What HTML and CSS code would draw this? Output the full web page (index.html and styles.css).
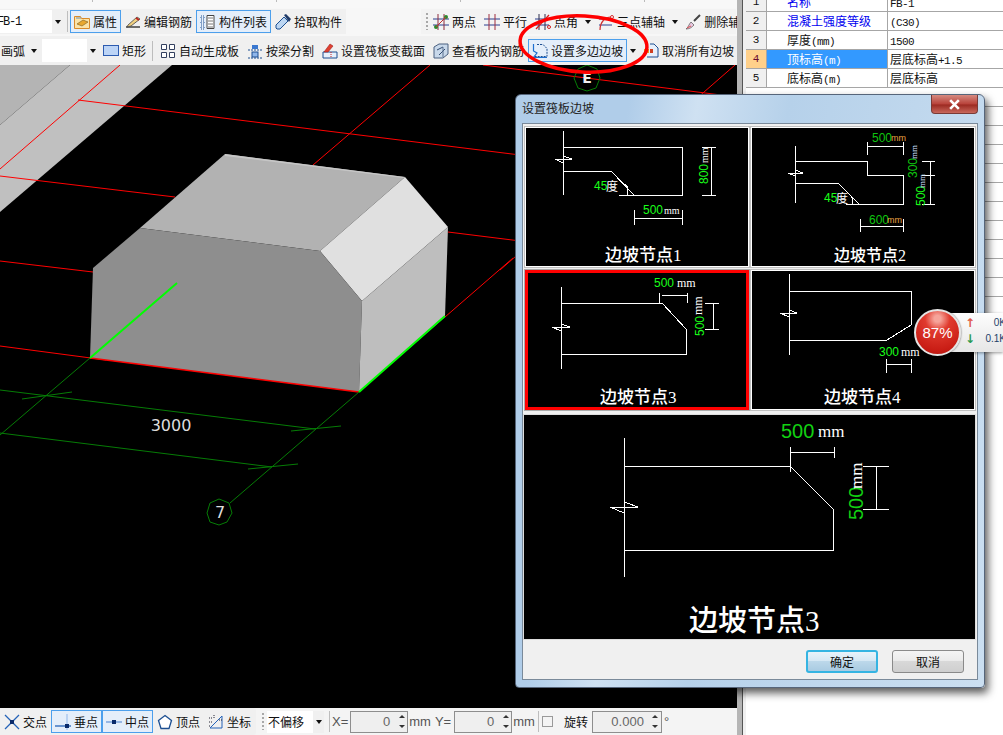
FILE: index.html
```html
<!DOCTYPE html>
<html lang="zh">
<head>
<meta charset="utf-8">
<title>设置筏板边坡</title>
<link rel="stylesheet" href="styles.css">
</head>
<body>
<div class="app">
  <div class="workspace">
    <div class="topstrip"><i></i><i></i><i></i><i></i></div>
    <div class="tb tb1">
      <div class="band">
        <div class="combo combo-fb"><span class="fbname">FB-1</span><b class="arrow-box"><i class="arrow"></i></b></div>
        <i class="sep"></i>
        <div class="btn on"><svg class="ic" viewBox="0 0 16 16"><path d="M.5 2.5h6l1 2h8v10H.5z" fill="#fbe3a8" stroke="#d98a2a"/><path d="M3 10l6-4 5 2-6 4z" fill="#e8a830" stroke="#7a5a20" stroke-width=".6"/><path d="M2 4h5" stroke="#6b8fb8"/></svg><span>属性</span></div>
        <div class="btn"><svg class="ic" viewBox="0 0 16 16"><path d="M1 13h14" stroke="#333" stroke-width="1.4"/><path d="M3 11l9-8 3 2-9 7-4 1z" fill="#f0d080" stroke="#444" stroke-width=".8"/><path d="M11 4l3 2" stroke="#c02020" stroke-width="1.6"/></svg><span>编辑钢筋</span></div>
        <div class="btn on"><svg class="ic" viewBox="0 0 16 16"><path d="M1 2h3v3H1zM1 7h3v3H1zM1 12h3v3H1z" fill="none" stroke="#1d4f91" stroke-dasharray="1 1"/><path d="M7 1.500h7v13H7z" fill="#fff" stroke="#444"/><path d="M8 4h5M8 7h5M8 10h5M8 13h5" stroke="#777"/></svg><span>构件列表</span></div>
        <div class="btn"><svg class="ic" viewBox="0 0 16 16"><path d="M9 3l4 4-8 8H2l-1-1v-3z" fill="#bcd6f2" stroke="#1d4f91"/><path d="M9 1l2-1 5 5-2 3z" fill="#203a68"/></svg><span>拾取构件</span></div>
      </div>
      <div class="band band-right">
        <i class="grip"></i>
        <div class="btn"><svg class="ic" viewBox="0 0 16 16"><path d="M0 5h16M0 11h16" stroke="#2c3f8f"/><path d="M5 0v16M11 0v16" stroke="#8f2c3f"/><circle cx="3" cy="13" r="2" fill="#2b8a2b"/><circle cx="13" cy="3" r="2" fill="#2b8a2b"/><path d="M3 13L13 3" stroke="#c03030"/></svg><span>两点</span></div>
        <div class="btn"><svg class="ic" viewBox="0 0 16 16"><path d="M0 5h16M0 11h16" stroke="#2c3f8f"/><path d="M5 0v16M11 0v16" stroke="#a02c3f"/></svg><span>平行</span></div>
        <div class="btn"><svg class="ic" viewBox="0 0 16 16"><path d="M0 5h14M0 11h14" stroke="#2c3f8f"/><path d="M4 0v16M10 0v16" stroke="#2c2c4f"/><path d="M1 15L14 1" stroke="#d02020" stroke-width="1.200"/><circle cx="14" cy="13" r="1.500" fill="none" stroke="#d02020"/></svg><span>点角</span></div>
        <i class="arrow-slot"><i class="arrow"></i></i>
        <div class="btn"><svg class="ic" viewBox="0 0 16 16"><path d="M1 5h13M1 11h13" stroke="#2c3f8f"/><path d="M2 16C2 8 7 3 13 3" fill="none" stroke="#d03030" stroke-width="1.200"/><circle cx="14" cy="3" r="1.500" fill="#fff" stroke="#d03030"/></svg><span>三点辅轴</span></div>
        <i class="arrow-slot"><i class="arrow"></i></i>
        <div class="btn"><svg class="ic" viewBox="0 0 16 16"><path d="M9 7l6-6" stroke="#444" stroke-width="2"/><path d="M1 15c2-1 3-5 5-7l3 3c-2 2-4 4-8 4z" fill="#e8c8e0" stroke="#555" stroke-width=".7"/><path d="M2 14l4-2" stroke="#e05050"/></svg><span>删除辅轴</span></div>
      </div>
    </div>
    <div class="tb tb2">
      <div class="band band-full">
        <div class="arc-label"><span>画弧</span><i class="arrow"></i></div>
        <div class="combo combo-blank"><b class="arrow-box"><i class="arrow"></i></b></div>
        <div class="btn"><svg class="ic" viewBox="0 0 16 16"><rect x=".5" y="2.500" width="15" height="10" fill="#bcd4f6" stroke="#2c5bb0"/></svg><span>矩形</span></div>
        <i class="sep sep-narrow"></i>
        <div class="btn"><svg class="ic" viewBox="0 0 16 16"><path d="M1.500 1.500h5v5h-5zM9.500 1.500h5v5h-5zM1.500 9.500h5v5h-5zM9.500 9.500h5v5h-5z" fill="#fff" stroke="#33405f"/></svg><span>自动生成板</span></div>
        <div class="btn"><svg class="ic" viewBox="0 0 16 16"><path d="M1 7h14M1 15h14" stroke="#1d4f91" stroke-dasharray="2 1"/><rect x="5" y="2" width="6" height="4" fill="#3a78d0"/><rect x="5" y="9" width="6" height="5" fill="#8fb6ea" stroke="#1d4f91"/></svg><span>按梁分割</span></div>
        <div class="btn"><svg class="ic" viewBox="0 0 16 16"><path d="M1 9h14v6H1z" fill="#e7f0fb" stroke="#1d4f91"/><path d="M2 9l6-8 3 2-5 6z" fill="#e04030" stroke="#a02020" stroke-width=".6"/><path d="M9 9v6" stroke="#d02020" stroke-dasharray="1 1"/></svg><span>设置筏板变截面</span></div>
        <div class="btn"><svg class="ic" viewBox="0 0 16 16"><path d="M1 4l5-3h9v10l-5 4H1z" fill="#c8d8ea" stroke="#4a6080"/><path d="M4 7l6-3M6 12l6-6" stroke="#304a70"/><path d="M10 4v10" stroke="#5a7090"/></svg><span>查看板内钢筋</span></div>
        <div class="btn on"><svg class="ic" viewBox="0 0 16 16"><path d="M5 1.500h6l4 4v8H3" fill="none" stroke="#1d4f91" stroke-dasharray="2 1"/><path d="M1.500 1v7l3.500 2-3.500 4.500H15" fill="none" stroke="#1d6fd0" stroke-width="1.200"/></svg><span>设置多边边坡</span></div>
        <i class="arrow-slot"><i class="arrow"></i></i>
        <div class="btn"><svg class="ic" viewBox="0 0 16 16"><path d="M4 14h11V5l-4-4H7" fill="#e7f0fb" stroke="#1d4f91"/><rect x="1" y="6" width="5" height="4" fill="#e8a020"/><rect x="7" y="6" width="3" height="4" fill="#d04020"/></svg><span>取消所有边坡</span></div>
      </div>
    </div>

    <svg class="cad" viewBox="0 65 737 643">
      <rect x="0" y="65" width="737" height="643" fill="#000"/>
      <polygon points="0,65 70,65 0,125" fill="#b4b4b4"/>
      <polygon points="70,65 172,65 0,212 0,125" fill="#c0c0c0"/>
      <g class="r">
        <line x1="120" y1="65" x2="0" y2="169"/>
        <line x1="78" y1="100" x2="737" y2="182"/>
        <line x1="0" y1="176" x2="175" y2="197"/>
        <line x1="448" y1="232" x2="737" y2="268"/>
        <line x1="0" y1="261" x2="93" y2="272"/>
        <line x1="0" y1="346" x2="106" y2="360"/>
        <line x1="430" y1="65" x2="313" y2="165"/>
        <line x1="483" y1="65" x2="737" y2="97"/>
        <line x1="735" y1="65" x2="500" y2="270"/>
        <line x1="513" y1="258" x2="445" y2="317"/>
      </g>
      <polygon points="225,154 405,177 320,251 140,228" fill="#b2b2b2"/>
      <polygon points="225,154 405,177 403,178 225,156" fill="#c6c6c6"/>
      <polygon points="405,177 448,227 362,301 320,251" fill="#e0e0e0"/>
      <polygon points="93,268 140,228 320,251 362,301 359,392 90,358" fill="#8e8e8e"/>
      <polygon points="362,301 448,227 445,317 359,392" fill="#bebebe"/>
      <line class="rb" x1="90" y1="358" x2="359" y2="392"/>
      <line class="gb" x1="177" y1="283" x2="90" y2="358"/>
      <line class="gb" x1="445" y1="316" x2="359" y2="392"/>
      <g class="dg">
        <line x1="90" y1="358" x2="0" y2="435"/>
        <line x1="359" y1="392" x2="230" y2="503"/>
        <line x1="0" y1="390" x2="315" y2="429"/>
        <line x1="0" y1="433" x2="272" y2="467"/>
        <line x1="22" y1="399" x2="72" y2="392"/>
        <line x1="291" y1="431" x2="341" y2="426"/>
        <line x1="248" y1="469" x2="298" y2="464"/>
        <polygon points="219,499 229,503 232,513 227,522 219,525 210,522 207,513 210,503"/>
        <polygon points="587,65 597,69 600,78 596,88 587,91 578,88 574,78 578,69"/>
      </g>
      <text class="cad-t" x="171" y="431" text-anchor="middle">3000</text>
      <text class="cad-t" x="220" y="518" text-anchor="middle">7</text>
      <text class="cad-e" x="587" y="83" text-anchor="middle">E</text>
    </svg>

    <div class="tb status">
      <div class="band band-status">
        <div class="btn"><svg class="ic" viewBox="0 0 16 16"><path d="M1 1l14 14M15 1L1 15" stroke="#2563b8" stroke-width="1.300"/><rect x="6" y="6" width="4" height="4" fill="#0a2a6a"/></svg><span>交点</span></div>
        <div class="btn on"><svg class="ic" viewBox="0 0 16 16"><path d="M0 12h16" stroke="#2563b8" stroke-width="1.300"/><path d="M12 0v16" stroke="#8fb6ea"/><rect x="10" y="10" width="4" height="4" fill="#0a2a6a"/></svg><span>垂点</span></div>
        <div class="btn on"><svg class="ic" viewBox="0 0 16 16"><path d="M0 8h16" stroke="#6c9ad8" stroke-width="1.300"/><rect x="6" y="6" width="4" height="4" fill="#0a2a6a"/></svg><span>中点</span></div>
        <div class="btn"><svg class="ic" viewBox="0 0 16 16"><polygon points="8,1.500 14.500,6.500 12,14.500 4,14.500 1.500,6.500" fill="#fff" stroke="#1d4f91" stroke-width="1.300"/></svg><span>顶点</span></div>
        <div class="btn"><svg class="ic" viewBox="0 0 16 16"><path d="M2 14L14 2M2 14h12V2" fill="none" stroke="#2563b8"/><path d="M1 4h3M1 8h3M1 12h1M6 1v3M11 6h3" stroke="#223" stroke-dasharray="1 1"/></svg><span>坐标</span></div>
      </div>
      <i class="grip grip-status"></i>
      <div class="combo combo-offset"><span>不偏移</span><b class="arrow-box"><i class="arrow"></i></b></div>
      <i class="sep sep-status"></i>
      <span class="lab lab-x">X=</span>
      <div class="spin"><span>0</span><b class="updn"><i></i><i></i></b></div>
      <span class="lab">mm</span>
      <span class="lab lab-y">Y=</span>
      <div class="spin"><span>0</span><b class="updn"><i></i><i></i></b></div>
      <span class="lab">mm</span>
      <i class="sep sep-status2"></i>
      <i class="check"></i>
      <span class="rot">旋转</span>
      <div class="spin spin-rot"><span>0.000</span><b class="updn"><i></i><i></i></b></div>
      <span class="lab">°</span>
    </div>
  </div>

  <div class="divider"></div>

  <div class="props">
    <div class="row"><div class="idx">1</div><div class="nm blue">名称</div><div class="val"><span class="lat">FB-1</span></div></div>
    <div class="row"><div class="idx">2</div><div class="nm blue">混凝土强度等级</div><div class="val"><span class="lat">(C30)</span></div></div>
    <div class="row"><div class="idx">3</div><div class="nm">厚度<span class="lat">(mm)</span></div><div class="val"><span class="lat">1500</span></div></div>
    <div class="row sel"><div class="idx">4</div><div class="nm">顶标高<span class="lat">(m)</span></div><div class="val">层底标高<span class="lat">+1.5</span></div></div>
    <div class="row"><div class="idx">5</div><div class="nm">底标高<span class="lat">(m)</span></div><div class="val">层底标高</div></div>
    <div class="row"></div><div class="row"></div><div class="row"></div><div class="row"></div><div class="row"></div><div class="row"></div>
    <div class="row"></div><div class="row"></div><div class="row"></div><div class="row"></div><div class="row"></div><div class="row"></div><div class="row"></div>
  </div>
</div>

<div class="dialog">
  <div class="titlebar">
    <span>设置筏板边坡</span>
    <div class="close"><svg viewBox="0 0 12 10" class="close-x"><path d="M2 1l8 8M10 1L2 9" stroke="#fff" stroke-width="2.400"/></svg></div>
  </div>
  <div class="client">
    <div class="thumbs">
      <div class="thumb">
        <svg class="d" viewBox="526 128 222 138">
          <path d="M563 131V195M563 147H682V195H619M563 171H611L634 195M555 159H572M555 159L563 163M563 156L572 159M627 195Q630 188 625 184M702 147H716M702 195H716M711 147V195M634 218H682M634 210V225M682 210V225"/>
          <text class="gn" x="594" y="190">45</text><text class="wt" x="606" y="191">度</text>
          <text class="gn" transform="rotate(-90 708 184)" x="708" y="184">800</text>
          <text class="mm" transform="rotate(-90 708 163)" x="708" y="163">mm</text>
          <text class="gn" x="643" y="214">500</text><text class="mm" x="664" y="214">mm</text>
          <text class="ttl" x="605" y="261">边坡节点1</text>
        </svg>
      </div>
      <div class="thumb">
        <svg class="d" viewBox="752 128 222 138">
          <path d="M795 146V203M795 161H867V175H903V204H846M795 183H838L859 204M788 173H803M788 173L795 176M795 170L803 173M852 204Q854 198 850 195M867 146H903M867 142V155M903 142V155M930 161V204M922 161H935M922 175H935M922 204H935M860 226H903M860 219V232M903 219V232"/>
          <text class="gn dk" x="872" y="142">500</text><text class="mmo" x="891" y="141">mm</text>
          <text class="gn dk" transform="rotate(-90 917 178)" x="917" y="178">300</text><text class="mm mmb" transform="rotate(-90 917 159)" x="917" y="159">mm</text>
          <text class="gn" transform="rotate(-90 925 206)" x="925" y="206">500</text><text class="mm mmb" transform="rotate(-90 925 188)" x="925" y="188">mm</text>
          <text class="gn" x="824" y="202">45</text><text class="wt" x="836" y="203">度</text>
          <text class="gn dk" x="869" y="224">600</text><text class="mmo" x="887" y="223">mm</text>
          <text class="ttl ttl2" x="834" y="261">边坡节点2</text>
        </svg>
      </div>
      <div class="thumb picked">
        <svg class="d" viewBox="528 273 218 134">
          <path d="M561 287V369M561 303H662L686 329V354H561M552 327H570M552 327L561 331M561 324L570 327M662 295H687M659 293V303M687 293V303M713 303V329M705 303H719M705 329H719"/>
          <text class="gn" x="654" y="287">500</text><text class="mm mms" x="677" y="287">mm</text>
          <text class="gn" transform="rotate(-90 704 336)" x="704" y="336">500</text><text class="mm mms" transform="rotate(-90 702 315)" x="702" y="315">mm</text>
          <text class="ttl" x="600" y="403">边坡节点3</text>
        </svg>
      </div>
      <div class="thumb">
        <svg class="d" viewBox="752 271 222 138">
          <path d="M789 274V355M789 291H911V325L887 340H789M780 313H797M780 313L789 317M789 310L797 313M886 364H911M886 359V373M911 359V373"/>
          <text class="gn" x="879" y="356">300</text><text class="mm mms" x="901" y="356">mm</text>
          <text class="ttl" x="824" y="403">边坡节点4</text>
        </svg>
      </div>
      <div class="thumb wide">
        <svg class="d" viewBox="524 415 451 224">
          <path d="M624 438V577M624 466H790L833 509V550H624M610 507H638M610 507L624 513M624 502L638 507M790 452H834M790 447V472M834 447V458M876 466V509M863 466H889M863 509H889"/>
          <text class="gn big" x="781" y="438">500</text><text class="mm mml" x="818" y="437">mm</text>
          <text class="gn big" transform="rotate(-90 863 520)" x="863" y="520">500</text><text class="mm mml" transform="rotate(-90 862 489)" x="862" y="489">mm</text>
          <text class="ttl ttll" x="689" y="631">边坡节点3</text>
        </svg>
      </div>
    </div>
    <div class="actions">
      <div class="dlgbtn default">确定</div>
      <div class="dlgbtn">取消</div>
    </div>
  </div>
</div>

<div class="netpanel">
  <div class="netrow"><i class="up">↑</i><span>0K</span></div>
  <div class="netrow"><i class="down">↓</i><span>0.1K</span></div>
</div>
<div class="ball">87%</div>

<svg class="ring" viewBox="515 10 140 68"><ellipse cx="583.500" cy="44" rx="63.500" ry="28" transform="rotate(3 583.500 44)"/></svg>
</body>
</html>
```
FILE: styles.css
```css
* { box-sizing: border-box; }
html, body { margin: 0; padding: 0; }
body {
  position: relative;
  width: 1003px;
  height: 735px;
  overflow: hidden;
  background: #fff;
  font: 12px "Noto Sans CJK SC", "Liberation Sans", sans-serif;
  color: #111;
}
i, b { font-style: normal; font-weight: normal; display: block; }
.app { display: flex; width: 1003px; height: 735px; }
.workspace { width: 737px; flex: none; display: flex; flex-direction: column; overflow: hidden; }

.topstrip { height: 8px; background: #f8f8f8; display: flex; justify-content: space-around; }
.topstrip i { width: 1px; height: 2px; background: #bbb; }

.tb { display: flex; align-items: center; background: #f7f7f7; flex: none; width: 737px; overflow: hidden; }
.tb1 { height: 28px; align-items: flex-start; padding-top: 1px; }
.tb2 { height: 29px; }
.status { height: 27px; background: #f4f4f4; }
.band { display: flex; align-items: center; height: 25px; background: #f0f0f0; flex: none; }
.band-right { margin-left: 75px; background: #f3f3f3; padding-left: 5px; width: 315px; height: 25px; }
.band-full { width: 737px; height: 29px; }
.band-status { height: 27px; width: 256px; border-radius: 0 3px 3px 0; }

.btn {
  display: flex; align-items: center; gap: 3px; flex: none;
  height: 23px; padding: 0 3px;
  border: 1px solid transparent;
  white-space: nowrap;
  line-height: 16px;
}
.btn.on { border-color: #4c9fec; background: #e4eefa; }
.ic { width: 16px; height: 16px; flex: none; display: block; }

.lat { font-family: "Liberation Mono", monospace; font-size: 11px; letter-spacing: -.6px; }
.sep { width: 1px; height: 21px; background: #bdbdbd; flex: none; margin: 0 2px 0 4px; }
.sep-narrow { margin: 0 3px 0 2px; height: 20px; }
.grip { width: 2px; height: 17px; flex: none; margin-right: 1px;
  background: repeating-linear-gradient(#a8a8a8 0 2px, transparent 2px 4px); }
.arrow { width: 0; height: 0; border: 3px solid transparent; border-top: 4px solid #111; border-bottom: 0; display: block; }
.arrow-slot { width: 12px; flex: none; display: flex; justify-content: center; }
.arrow-box { position: relative; width: 11px; height: 100%; background: #f0f0f0; display: flex; align-items: center; justify-content: center; flex: none; }

.combo { display: flex; align-items: center; justify-content: space-between; background: #fff; height: 23px; flex: none; }
.combo-fb { width: 63px; }
.fbname { font: 12px "Liberation Mono", monospace; letter-spacing: -1.2px; margin-left: -3px; }
.combo-blank { width: 56px; height: 23px; justify-content: flex-end; margin-right: 1px; }
.combo-offset { width: 57px; height: 22px; margin-left: 3px; padding-left: 1px; }
.arc-label { width: 42px; flex: none; display: flex; align-items: center; gap: 6px; padding-left: 1px; }

.cad { width: 737px; height: 643px; display: block; flex: none; }
.r line { stroke: #f00; stroke-width: 1; }
.rb { stroke: #f00; stroke-width: 1.5; }
.gb { stroke: #0f0; stroke-width: 2; }
.dg line, .dg polygon { stroke: #067c06; stroke-width: 1; fill: none; }
.cad-t { fill: #ddd; font: 16px "DejaVu Sans", sans-serif; }
.cad-e { fill: #eee; font: bold 14px "DejaVu Sans", sans-serif; }

.lab { color: #555; font: 13px "Liberation Sans", sans-serif; flex: none; }
.lab-x { margin: 0 2px 0 1px; }
.lab-y { margin: 0 3px 0 4px; }
.spin {
  width: 58px; height: 22px; margin: 0 1px 0 0; flex: none;
  display: flex; align-items: center; justify-content: flex-end; gap: 6px;
  background: #efefef; border: 1px solid #8e8e8e;
  color: #666; font: 13px "Liberation Sans", sans-serif;
}
.spin-rot { width: 70px; margin-right: 2px; }
.updn { width: 11px; height: 100%; display: flex; flex-direction: column; justify-content: space-around; align-items: center; }
.updn i { width: 0; height: 0; border: 3px solid transparent; }
.updn i:first-child { border-bottom: 3px solid #333; border-top: 0; }
.updn i:last-child { border-top: 3px solid #333; border-bottom: 0; }
.grip-status { margin-left: 6px; margin-right: 0; }
.sep-status { margin: 0 1px 0 5px; }
.sep-status2 { margin: 0 3px; }
.check { width: 11px; height: 11px; border: 1px solid #9a9a9a; background: #f4f4f4; flex: none; }
.rot { margin: 0 4px 0 11px; flex: none; }

.divider {
  width: 9px; flex: none;
  background: linear-gradient(90deg, #b5b5b5 0 5px, #555 5px 6px, #f0f0f0 6px);
}
.props { flex: 1; margin-top: -7px; display: flex; flex-direction: column; }
.row { display: flex; height: 19px; border-bottom: 1px solid #a6a6a6; line-height: 18px; flex: none; }
.idx { width: 21px; text-align: center; background: #f0f0f0; border-right: 1px solid #a6a6a6; font: 11px/18px "Liberation Mono", monospace; }
.nm { width: 121px; padding-left: 20px; border-right: 1px solid #a6a6a6; white-space: nowrap; }
.val { flex: 1; padding-left: 2px; white-space: nowrap; }
.blue { color: #0000f0; }
.row.sel .idx { background: #ffd08a; color: #6a0a30; }
.row.sel .nm { background: #3399ff; color: #fff; }

.dialog {
  position: absolute; left: 515px; top: 94px; width: 470px; height: 594px;
  display: flex; flex-direction: column;
  border: 1px solid #56657a; border-radius: 6px 6px 4px 4px;
  background: linear-gradient(100deg, #b0cde9 0 20%, #cfe1f2 32%, #b6d1ea 48%, #cbdff1 100%);
  box-shadow: 3px 5px 9px rgba(0,0,0,.65);
}
.titlebar { height: 28px; flex: none; display: flex; justify-content: space-between; align-items: flex-start; padding: 4px 6px 0 6px; color: #222; }
.titlebar span { line-height: 18px; }
.close {
  width: 47px; height: 19px; margin-top: -4px;
  display: flex; align-items: center; justify-content: center;
  background: linear-gradient(#d68a80, #b8423a 50%, #9c2a22 55%, #c8685c);
  border: 1px solid #7a3a36; border-top: 0; border-radius: 0 0 4px 4px;
}
.close-x { width: 13px; height: 11px; display: block; }
.client { margin: 0 6px 7px 6px; flex: 1; background: #f0f0f0; border: 1px solid #7a8a9a; padding: 3px 2px 0; display: flex; flex-direction: column; }
.thumbs { display: grid; grid-template-columns: 224px 224px; grid-template-rows: 140px 140px 224px; column-gap: 2px; row-gap: 3px; }
.thumb { border: 1px solid #fff; outline: 1px solid #c0c0c0; outline-offset: 0; background: #000; min-width: 0; min-height: 0; }
.thumb.picked { border: 3px solid #f00; outline-color: #aaa; }
.thumb.wide { grid-column: 1 / span 2; width: 451px; height: 224px; margin: 2px 0 0 -1px; border: 0; outline: 1px solid #ddd; }
.d { display: block; width: 100%; height: 100%; }
.d path { fill: none; stroke: #fff; stroke-width: 1; shape-rendering: crispEdges; }
.d text { font-family: "Liberation Sans", sans-serif; }
.d .gn { fill: #19ff19; font-size: 12px; }
.d .dk { fill: #0fc40f; }
.d .gn.big { font-size: 20px; fill: #12d012; }
.d .wt { fill: #fff; font: 12px "Noto Sans CJK SC", sans-serif; }
.d .mm { fill: #fff; font-size: 10px; font-family: "Liberation Serif", serif; }
.d .mms { font-size: 12px; }
.d .mml { font-size: 17px; }
.d .mmb { fill: #cfe0ff; font-size: 9px; }
.d .mmo { fill: #e8a040; font-size: 9px; }
.d .ttl { fill: #fff; font: 500 17px "Liberation Serif", "Noto Sans CJK SC", serif; }
.d .ttl2 { font-size: 16px; }
.d .ttll { font-size: 29px; }

.actions { display: flex; justify-content: flex-end; gap: 14px; padding: 12px 11px 0 0; margin-top: 1px; }
.dlgbtn {
  width: 72px; height: 23px; line-height: 21px; text-align: center; font-size: 12px;
  border: 1px solid #8a8a8a; border-radius: 3px;
  background: linear-gradient(#f4f4f4, #ebebeb 45%, #d8d8d8 50%, #cfcfcf);
}
.dlgbtn.default { border: 2px solid #35b4e2; line-height: 19px; background: linear-gradient(#e8f3fa, #d6e8f4 45%, #bcd8ea 50%, #a9cbe2); }

.netpanel {
  position: absolute; left: 948px; top: 313px; width: 55px; height: 39px;
  padding: 2px 0 0 17px;
  overflow: hidden;
  background: linear-gradient(#fdfdfd, #e6e6e6);
  box-shadow: 0 1px 3px rgba(0,0,0,.4);
}
.netrow { display: flex; justify-content: space-between; height: 16px; margin-right: -3px; font: 10px/16px "Liberation Sans", sans-serif; color: #1c3f6a; }
.up { color: #e05a4a; font: bold 12px/16px "DejaVu Sans", sans-serif; }
.down { color: #2a9a50; font: bold 12px/16px "DejaVu Sans", sans-serif; }
.ball {
  position: absolute; left: 914px; top: 309px; width: 47px; height: 47px;
  border-radius: 50%; border: 2px solid #e4e4e4;
  background: radial-gradient(circle at 50% 18%, #f6a49a 0 8%, #e03a2e 30%, #c81c14 78%, #a01410);
  box-shadow: 0 0 2px rgba(0,0,0,.7);
  color: #fff; text-align: center;
  font: 15px/43px "Liberation Sans", sans-serif;
}
.ring { position: absolute; left: 515px; top: 10px; width: 140px; height: 68px; overflow: visible; }
.ring ellipse { fill: none; stroke: #f00; stroke-width: 3.5; }
```
